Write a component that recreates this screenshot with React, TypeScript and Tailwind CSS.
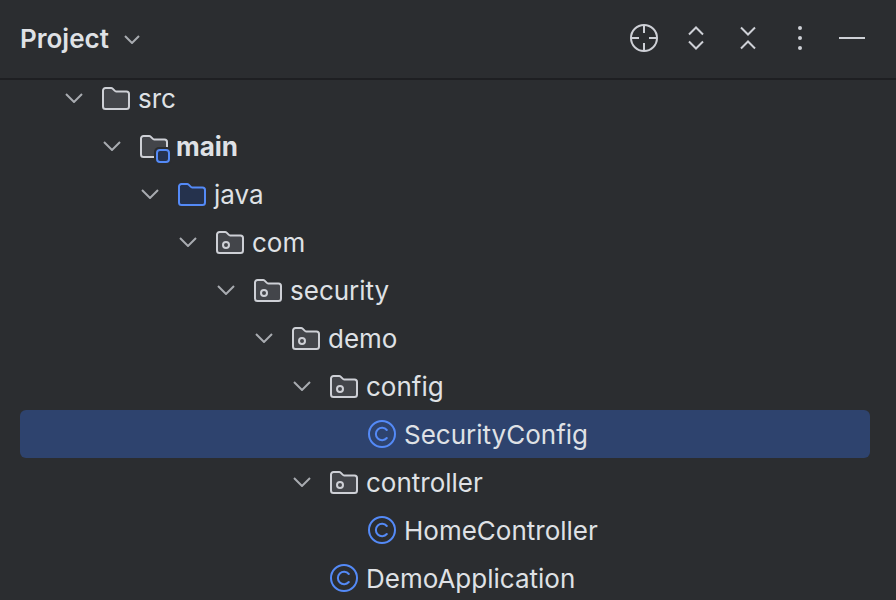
type Kind = "folder" | "module" | "source" | "package" | "class";

const rows: { label: string; level: number; kind: Kind; open?: boolean; selected?: boolean; bold?: boolean }[] = [
  { label: "src", level: 0, kind: "folder", open: true },
  { label: "main", level: 1, kind: "module", open: true, bold: true },
  { label: "java", level: 2, kind: "source", open: true },
  { label: "com", level: 3, kind: "package", open: true },
  { label: "security", level: 4, kind: "package", open: true },
  { label: "demo", level: 5, kind: "package", open: true },
  { label: "config", level: 6, kind: "package", open: true },
  { label: "SecurityConfig", level: 7, kind: "class", selected: true },
  { label: "controller", level: 6, kind: "package", open: true },
  { label: "HomeController", level: 7, kind: "class" },
  { label: "DemoApplication", level: 6, kind: "class" },
];

const folderPath = "M1 3.500A2.500 2.500 0 0 1 3.500 1h5.600c.6 0 1.100.2 1.500.6l2.300 2.300c.3.3.7.5 1.100.5h10.500A2.500 2.500 0 0 1 27 6.900v12.600a2.500 2.500 0 0 1-2.500 2.500h-21A2.500 2.500 0 0 1 1 19.500z";

function NodeIcon({ kind }: { kind: Kind }) {
  if (kind === "class") {
    return (
      <svg width="28" height="28" viewBox="0 0 28 28" fill="none">
        <circle cx="14" cy="14" r="13" stroke="#548af7" strokeWidth="2" />
        <path d="M18.800 10a6.200 6.200 0 1 0 0 8" stroke="#548af7" strokeWidth="2" strokeLinecap="round" />
      </svg>
    );
  }
  const fill = kind === "source" ? "#25324d" : "#43454a";
  const stroke = kind === "source" ? "#548af7" : "#ced0d6";
  return (
    <svg width="28" height="23" viewBox="0 0 28 23" fill="none" className="overflow-visible">
      <path d={folderPath} fill={fill} stroke={stroke} strokeWidth="2" />
      {kind === "package" && <circle cx="10" cy="14" r="3" stroke={stroke} strokeWidth="2" />}
      {kind === "module" && (
        <>
          <rect x="14" y="12" width="18" height="18" rx="5" fill="#2b2d30" />
          <rect x="17" y="15" width="12" height="12" rx="3" fill="#25324d" stroke="#548af7" strokeWidth="2" />
        </>
      )}
    </svg>
  );
}

function Chevron() {
  return (
    <svg width="18" height="10" viewBox="0 0 18 10" fill="none">
      <path d="M1 1l8 8 8-8" stroke="#a8abb0" strokeWidth="2" />
    </svg>
  );
}

export default function App() {
  return (
    <div className="flex h-[600px] w-[896px] flex-col overflow-hidden bg-[#2b2d30] font-['Inter',sans-serif] text-[#dfe1e5]">
      <header className="flex h-[80px] shrink-0 items-center justify-between border-b-2 border-[#1e1f22] pb-[2px] pl-5 pr-[31px]">
        <div className="flex items-center gap-[15px]">
          <span className="text-[26px] font-semibold">Project</span>
          <svg width="16" height="9" viewBox="0 0 16 9" fill="none" className="mt-[3px]">
            <path d="M1 1l7 7 7-7" stroke="#a8abb0" strokeWidth="2" />
          </svg>
        </div>
        <div className="flex items-center text-[#ced0d6]">
          <svg width="28" height="28" viewBox="0 0 28 28" fill="none" stroke="currentColor" strokeWidth="2">
            <circle cx="14" cy="14" r="13" />
            <path d="M14 1v8M14 19v8M1 14h8M19 14h8" />
          </svg>
          <svg width="16" height="24" viewBox="0 0 16 24" fill="none" stroke="currentColor" strokeWidth="2" className="ml-[30px]">
            <path d="M1 8.500 8 1.500l7 7M1 15.500l7 7 7-7" />
          </svg>
          <svg width="16" height="24" viewBox="0 0 16 24" fill="none" stroke="currentColor" strokeWidth="2" className="ml-[36px]">
            <path d="M1 1.500l7 7 7-7M1 22.500l7-7 7 7" />
          </svg>
          <svg width="4" height="24" viewBox="0 0 4 24" fill="currentColor" className="ml-[42px]">
            <circle cx="2" cy="2" r="2" />
            <circle cx="2" cy="12" r="2" />
            <circle cx="2" cy="22" r="2" />
          </svg>
          <svg width="26" height="2" viewBox="0 0 26 2" className="ml-[37px]">
            <rect width="26" height="2" fill="currentColor" />
          </svg>
        </div>
      </header>
      <main className="-mt-[6px] flex flex-col pl-5 pr-[26px]">
        {rows.map((row) => (
          <div
            key={row.label}
            className={`flex h-[48px] items-center rounded-[6px] text-[26px] ${row.selected ? "bg-[#2e436e]" : ""} ${row.bold ? "font-bold" : ""}`}
            style={{ paddingLeft: 45 + row.level * 38 }}
          >
            <span className="flex w-[18px] justify-center">{row.open && <Chevron />}</span>
            <span className="ml-[19px] flex w-[28px] justify-center">
              <NodeIcon kind={row.kind} />
            </span>
            <span className="ml-[8px]">{row.label}</span>
          </div>
        ))}
      </main>
    </div>
  );
}
